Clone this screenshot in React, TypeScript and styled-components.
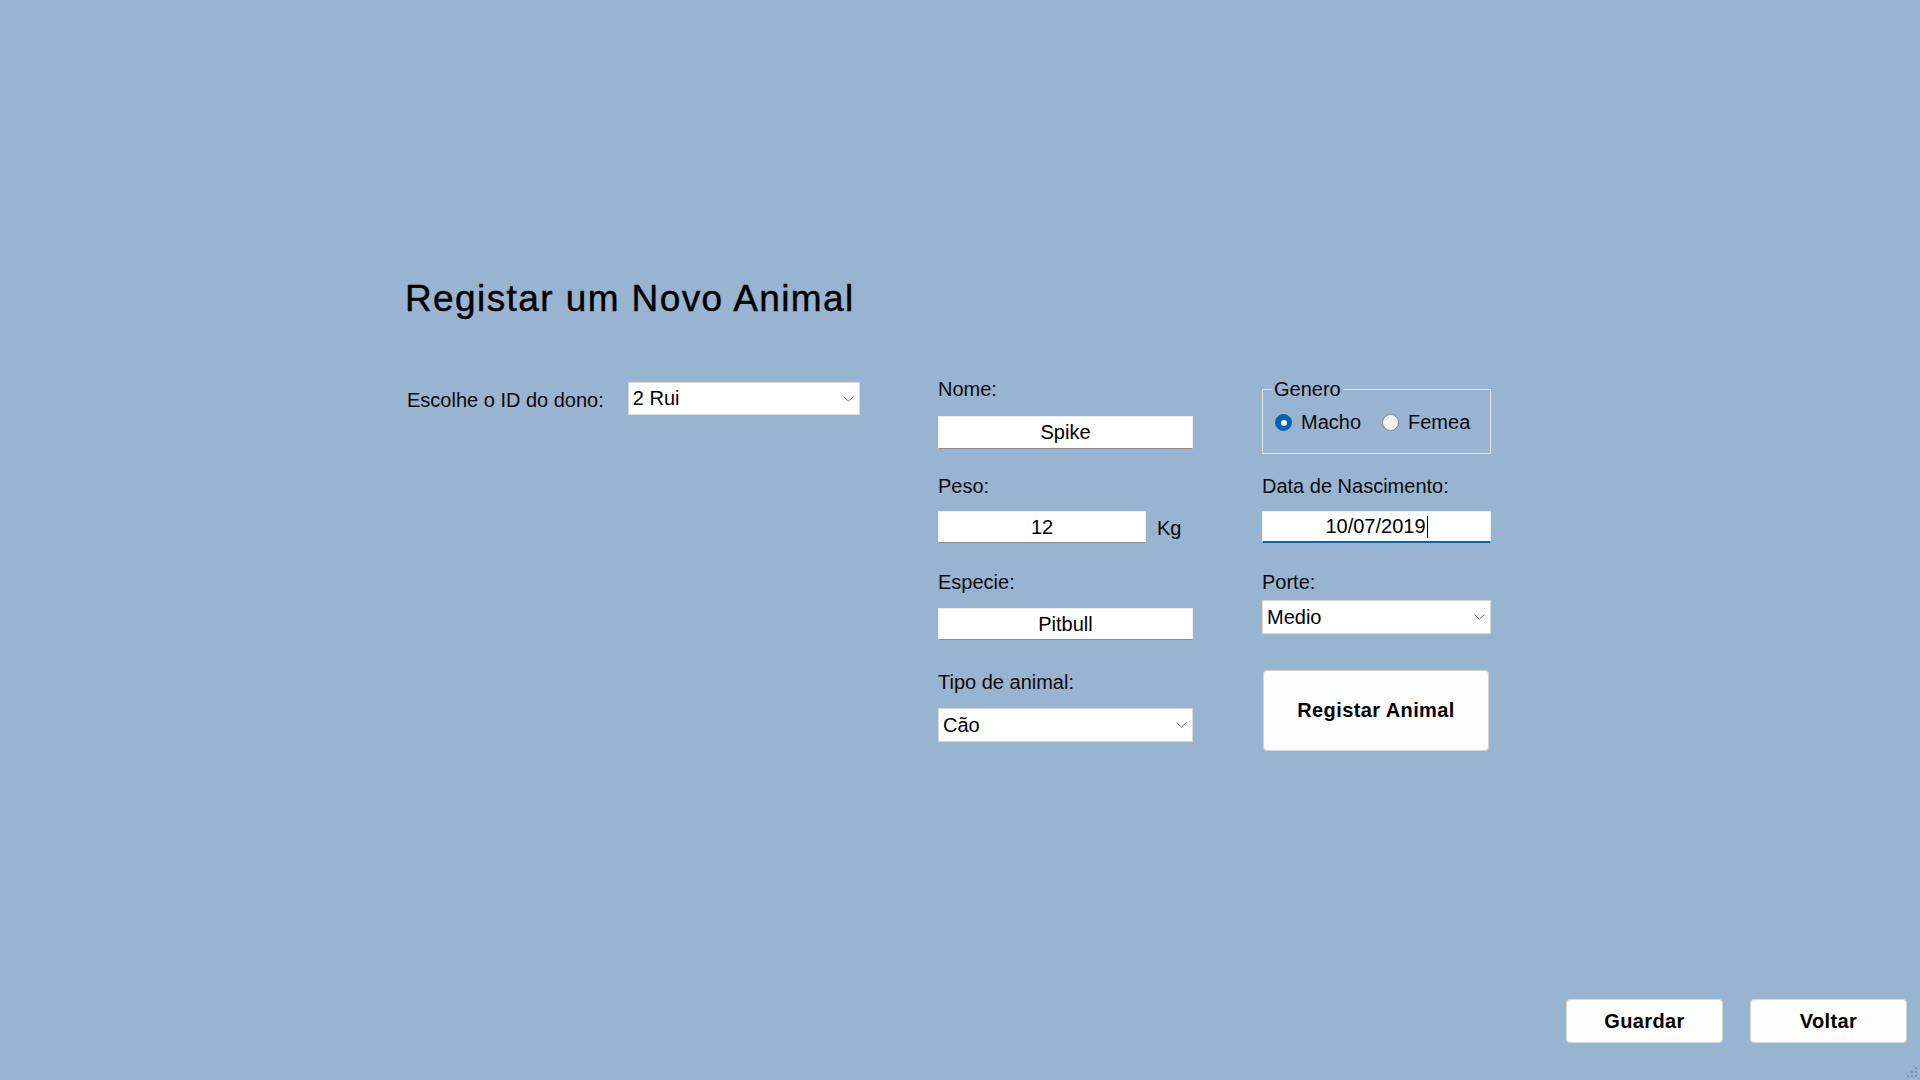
import React from "react";
import styled, { createGlobalStyle } from "styled-components";

const GlobalStyle = createGlobalStyle`
  html, body { margin: 0; padding: 0; }
  body {
    background: #99b4d1;
    font-family: "Liberation Sans", Arial, sans-serif;
    color: #000;
  }
  * { box-sizing: border-box; }
`;

const Window = styled.div`
  position: relative;
  width: 1920px;
  height: 1080px;
  overflow: hidden;
  display: flex;
  flex-direction: column;
  padding: 277px 13px 37px 405px;
  background: #99b4d1;
`;

const Title = styled.h1`
  margin: 0;
  font-size: 37px;
  line-height: 43px;
  font-weight: 400;
  letter-spacing: 1.4px;
  -webkit-text-stroke: 0.45px #000;
  color: #000;
`;

const FormRow = styled.div`
  display: flex;
  align-items: flex-start;
  margin-top: 57px;
`;

const OwnerSection = styled.div`
  width: 533px;
  padding: 5px 0 0 2px;
  display: flex;
  align-items: center;
`;

const Label = styled.div<{ $mt?: number }>`
  font-size: 20px;
  line-height: 23px;
  color: #0a0a0a;
  white-space: nowrap;
  margin-top: ${(p) => p.$mt ?? 0}px;
`;

const OwnerLabel = styled(Label)`
  padding-top: 3px;
  margin-right: 24px;
`;

const Column = styled.div<{ $w: number; $ml?: number; $pt?: number }>`
  width: ${(p) => p.$w}px;
  margin-left: ${(p) => p.$ml ?? 0}px;
  padding-top: ${(p) => p.$pt ?? 0}px;
  display: flex;
  flex-direction: column;
`;

const TextBox = styled.div<{ $w?: number; $h: number; $mt?: number; $focused?: boolean }>`
  width: ${(p) => (p.$w ? `${p.$w}px` : "100%")};
  height: ${(p) => p.$h}px;
  margin-top: ${(p) => p.$mt ?? 0}px;
  background: #fff;
  border: 1px solid #eceef1;
  border-bottom: ${(p) => (p.$focused ? "2px solid #0067c0" : "1px solid #8d8d8d")};
  display: flex;
  align-items: center;
  justify-content: center;
  font-size: 20px;
  line-height: 23px;
  color: #000;
`;

const Caret = styled.span`
  display: inline-block;
  width: 1px;
  height: 22px;
  background: #000;
  margin-left: 1px;
`;

const InlineRow = styled.div<{ $mt?: number }>`
  display: flex;
  align-items: center;
  margin-top: ${(p) => p.$mt ?? 0}px;
`;

const Unit = styled.span`
  font-size: 20px;
  line-height: 23px;
  margin-left: 11px;
  padding-top: 2px;
  color: #0a0a0a;
`;

const ComboBox = styled.div<{ $w?: number; $h: number; $mt?: number }>`
  width: ${(p) => (p.$w ? `${p.$w}px` : "100%")};
  height: ${(p) => p.$h}px;
  margin-top: ${(p) => p.$mt ?? 0}px;
  background: #fff;
  border: 1px solid #d6d9dd;
  display: flex;
  align-items: center;
  justify-content: space-between;
  padding: 0 5px 0 4px;
  font-size: 20px;
  line-height: 23px;
  color: #000;
`;

const Chevron = () => (
  <svg width="11" height="6" viewBox="0 0 11 6" aria-hidden="true">
    <path d="M0.5 0.5 L5.5 5.2 L10.5 0.5" fill="none" stroke="#707070" strokeWidth="1" />
  </svg>
);

const GroupBox = styled.fieldset`
  margin: 0;
  width: 100%;
  border: 1px solid #dde4ec;
  padding: 10px 12px 19px 12px;
  min-inline-size: 0;
`;

const Legend = styled.legend`
  font-size: 20px;
  line-height: 23px;
  padding: 0 2px;
  margin-left: -3px;
  color: #0a0a0a;
`;

const RadioRow = styled.div`
  display: flex;
  align-items: center;
  height: 23px;
`;

const RadioItem = styled.label`
  display: flex;
  align-items: center;
  font-size: 20px;
  line-height: 23px;
  color: #0a0a0a;
  margin-right: 21px;
`;

const RadioCircle = styled.span<{ $checked?: boolean }>`
  width: 17px;
  height: 17px;
  border-radius: 50%;
  margin-right: 9px;
  flex-shrink: 0;
  display: flex;
  align-items: center;
  justify-content: center;
  background: ${(p) => (p.$checked ? "#0063b8" : "#f4f4f4")};
  border: 1px solid ${(p) => (p.$checked ? "#0063b8" : "#858585")};
  &::after {
    content: "";
    width: 6px;
    height: 6px;
    border-radius: 50%;
    background: #fff;
    display: ${(p) => (p.$checked ? "block" : "none")};
  }
`;

const PushButton = styled.button<{ $w: number; $h: number; $mt?: number; $ml?: number }>`
  width: ${(p) => p.$w}px;
  height: ${(p) => p.$h}px;
  margin-top: ${(p) => p.$mt ?? 0}px;
  margin-left: ${(p) => p.$ml ?? 0}px;
  background: #fdfdfd;
  border: 1px solid #d3d6da;
  border-radius: 4px;
  font-family: "Liberation Sans", Arial, sans-serif;
  font-weight: 700;
  font-size: 20px;
  letter-spacing: 0.4px;
  color: #000;
  padding: 0;
  cursor: default;
`;

const Footer = styled.div`
  margin-top: auto;
  display: flex;
  justify-content: flex-end;
  align-items: flex-end;
  gap: 27px;
`;

const Grip = styled.svg`
  position: absolute;
  right: 2px;
  bottom: 2px;
`;

export default function App() {
  return (
    <>
      <GlobalStyle />
      <Window>
        <Title>Registar um Novo Animal</Title>
        <FormRow>
          <OwnerSection>
            <OwnerLabel>Escolhe o ID do dono:</OwnerLabel>
            <ComboBox $w={232} $h={33}>
              <span>2 Rui</span>
              <Chevron />
            </ComboBox>
          </OwnerSection>

          <Column $w={255} $pt={1}>
            <Label>Nome:</Label>
            <TextBox $h={33} $mt={15}>Spike</TextBox>
            <Label $mt={26}>Peso:</Label>
            <InlineRow $mt={13}>
              <TextBox $w={208} $h={32}>12</TextBox>
              <Unit>Kg</Unit>
            </InlineRow>
            <Label $mt={28}>Especie:</Label>
            <TextBox $h={32} $mt={14}>Pitbull</TextBox>
            <Label $mt={31}>Tipo de animal:</Label>
            <ComboBox $h={34} $mt={14}>
              <span>Cão</span>
              <Chevron />
            </ComboBox>
          </Column>

          <Column $w={229} $ml={69} $pt={1}>
            <GroupBox>
              <Legend>Genero</Legend>
              <RadioRow>
                <RadioItem>
                  <RadioCircle $checked />
                  Macho
                </RadioItem>
                <RadioItem>
                  <RadioCircle />
                  Femea
                </RadioItem>
              </RadioRow>
            </GroupBox>
            <Label $mt={21}>Data de Nascimento:</Label>
            <TextBox $h={32} $mt={13} $focused>
              10/07/2019
              <Caret />
            </TextBox>
            <Label $mt={28}>Porte:</Label>
            <ComboBox $h={34} $mt={6}>
              <span>Medio</span>
              <Chevron />
            </ComboBox>
            <PushButton $w={226} $h={81} $mt={36} $ml={1}>
              Registar Animal
            </PushButton>
          </Column>
        </FormRow>

        <Footer>
          <PushButton $w={157} $h={44}>Guardar</PushButton>
          <PushButton $w={157} $h={44}>Voltar</PushButton>
        </Footer>

        <Grip width="12" height="12" viewBox="0 0 12 12" aria-hidden="true">
          <rect x="9" y="1" width="2" height="2" fill="#8096b0" />
          <rect x="5" y="5" width="2" height="2" fill="#8096b0" />
          <rect x="9" y="5" width="2" height="2" fill="#8096b0" />
          <rect x="1" y="9" width="2" height="2" fill="#8096b0" />
          <rect x="5" y="9" width="2" height="2" fill="#8096b0" />
          <rect x="9" y="9" width="2" height="2" fill="#8096b0" />
        </Grip>
      </Window>
    </>
  );
}
